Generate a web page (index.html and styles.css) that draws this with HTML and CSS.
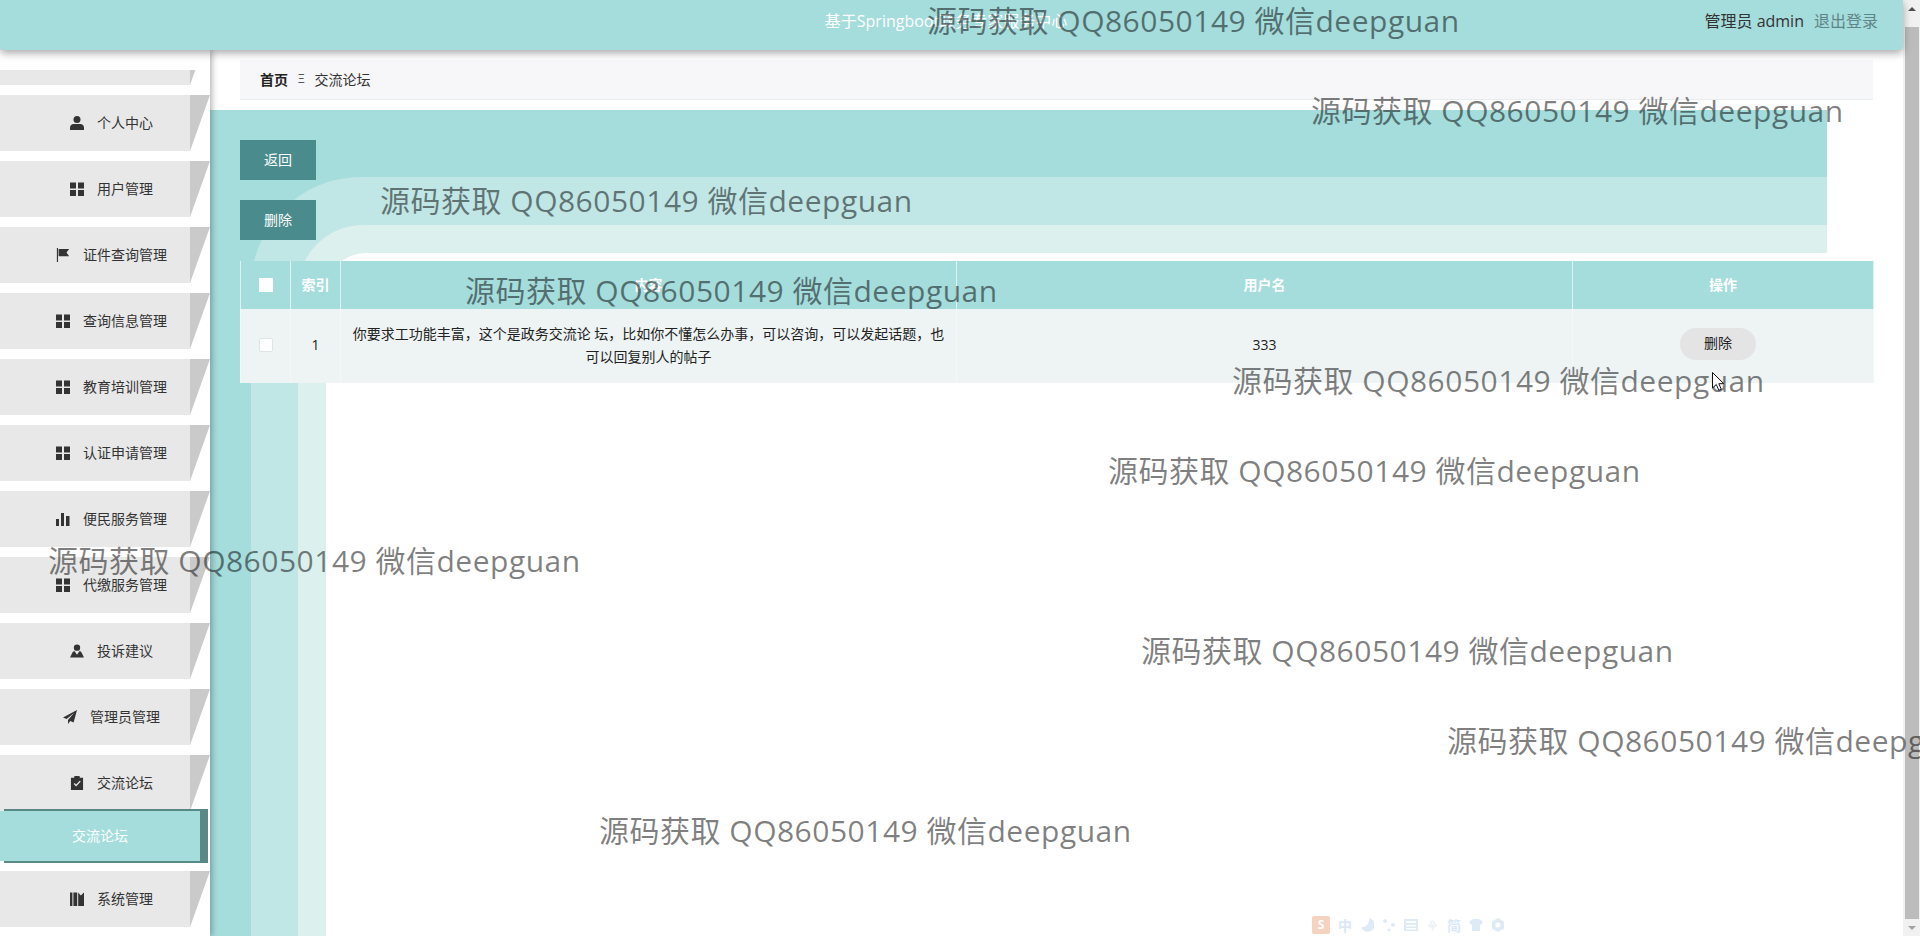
FILE: index.html
```html
<!DOCTYPE html>
<html lang="zh-CN">
<head>
<meta charset="UTF-8">
<meta name="viewport" content="width=device-width, initial-scale=1.0">
<title>交流论坛</title>
<link rel="stylesheet" href="styles.css">
</head>
<body>

<svg class="sprite" width="0" height="0">
    <symbol id="i-user" viewBox="0 0 14 14"><circle cx="7" cy="3.6" r="3.5"/><path d="M0 14v-2.4C0 9.4 1.8 8 3.6 8h6.8C12.2 8 14 9.4 14 11.6V14z"/></symbol>
    <symbol id="i-grid" viewBox="0 0 14 14"><path d="M0 .5h6v6H0zM8 .5h6v6H8zM0 8h6v6H0zM8 8h6v6H8z"/></symbol>
    <symbol id="i-flag" viewBox="0 0 14 16"><path d="M0 0h1.3v16H0zM2 1h12l-3 4 3 4.5H2z"/></symbol>
    <symbol id="i-bars" viewBox="0 0 14 14"><path d="M0 7h3v7H0zM5 1h3v13H5zM10 4h3.5v10H10z"/></symbol>
    <symbol id="i-tie" viewBox="0 0 15 14"><circle cx="7.5" cy="3.4" r="3.4"/><path d="M0 14l2.5-5.2C3 7.700 4 7.400 5 7.400L7.500 11 10 7.400c1 0 2 .3 2.500 1.400L15 14z"/></symbol>
    <symbol id="i-plane" viewBox="0 0 14 14"><path d="M14 0L0 7.600l3.600 1.500L11 3 5 10v4l2.300-3 3.300 1.400z"/></symbol>
    <symbol id="i-clip" viewBox="0 0 13 15"><path fill-rule="evenodd" d="M0 2h3.500V.8C3.500.3 4 0 4.500 0h4c.5 0 1 .3 1 .8V2H13v13H0zM3 8.500l2.600 2.700L10.500 6 9.400 5 5.600 9 4 7.400z"/></symbol>
    <symbol id="i-book" viewBox="0 0 14 14"><path d="M0 .5h2.400V14H0zM3.400.5h3.800v13.500H3.400zM8.200.5l2.600 3 3.200-3V14H8.200z"/></symbol>
</svg>

<div class="app">
    <div class="app-main">
        <header class="top-bar">
            <div class="top-title">基于Springboot政务专家服务中心</div>
            <div class="top-user">
                <span class="top-name">管理员 admin</span>
                <a class="top-logout" href="#">退出登录</a>
            </div>
        </header>

        <div class="layout">
            <aside class="sidebar">
                <nav class="menu">
                    <a class="menu-item menu-first" href="#"></a>
                    <a class="menu-item" href="#"><svg class="icon"><use href="#i-user"/></svg><span>个人中心</span></a>
                    <a class="menu-item" href="#"><svg class="icon"><use href="#i-grid"/></svg><span>用户管理</span></a>
                    <a class="menu-item" href="#"><svg class="icon"><use href="#i-flag"/></svg><span>证件查询管理</span></a>
                    <a class="menu-item" href="#"><svg class="icon"><use href="#i-grid"/></svg><span>查询信息管理</span></a>
                    <a class="menu-item" href="#"><svg class="icon"><use href="#i-grid"/></svg><span>教育培训管理</span></a>
                    <a class="menu-item" href="#"><svg class="icon"><use href="#i-grid"/></svg><span>认证申请管理</span></a>
                    <a class="menu-item" href="#"><svg class="icon"><use href="#i-bars"/></svg><span>便民服务管理</span></a>
                    <a class="menu-item" href="#"><svg class="icon"><use href="#i-grid"/></svg><span>代缴服务管理</span></a>
                    <a class="menu-item" href="#"><svg class="icon"><use href="#i-tie"/></svg><span>投诉建议</span></a>
                    <a class="menu-item" href="#"><svg class="icon"><use href="#i-plane"/></svg><span>管理员管理</span></a>
                    <a class="menu-item" href="#"><svg class="icon"><use href="#i-clip"/></svg><span>交流论坛</span></a>
                    <a class="menu-sub" href="#">交流论坛</a>
                    <a class="menu-item" href="#"><svg class="icon"><use href="#i-book"/></svg><span>系统管理</span></a>
                </nav>
            </aside>

            <main class="main">
                <!-- background bands behind the list -->
                <div class="bands">
                    <div class="band-1"><div class="band-2"><div class="band-3"><div class="band-4"></div></div></div></div>
                </div>

                <div class="crumbs">
                    <b>首页</b>
                    <span class="crumb-sep">Ξ</span>
                    <span>交流论坛</span>
                </div>

                <div class="actions">
                    <button class="btn">返回</button>
                    <button class="btn">删除</button>
                </div>

                <table class="list">
                    <colgroup>
                        <col class="col-check">
                        <col class="col-index">
                        <col class="col-text">
                        <col class="col-text">
                        <col class="col-ops">
                    </colgroup>
                    <thead>
                        <tr>
                            <th><input class="check check-head" type="checkbox"></th>
                            <th>索引</th>
                            <th>内容</th>
                            <th>用户名</th>
                            <th>操作</th>
                        </tr>
                    </thead>
                    <tbody>
                        <tr>
                            <td><input class="check" type="checkbox"></td>
                            <td>1</td>
                            <td>你要求工功能丰富，这个是政务交流论 坛，比如你不懂怎么办事，可以咨询，可以发起话题，也可以回复别人的帖子</td>
                            <td>333</td>
                            <td><button class="btn-row">删除</button></td>
                        </tr>
                    </tbody>
                </table>
            </main>
        </div>
    </div>

    <div class="scrollbar">
        <div class="scroll-btn"><span class="arrow-up"></span></div>
        <div class="scroll-thumb"></div>
        <div class="scroll-btn"><span class="arrow-down"></span></div>
    </div>
</div>

<div class="watermarks">
    <div class="wm wm-1">源码获取 QQ86050149 微信deepguan</div>
    <div class="wm wm-2">源码获取 QQ86050149 微信deepguan</div>
    <div class="wm wm-3">源码获取 QQ86050149 微信deepguan</div>
    <div class="wm wm-4">源码获取 QQ86050149 微信deepguan</div>
    <div class="wm wm-5">源码获取 QQ86050149 微信deepguan</div>
    <div class="wm wm-6">源码获取 QQ86050149 微信deepguan</div>
    <div class="wm wm-7">源码获取 QQ86050149 微信deepguan</div>
    <div class="wm wm-8">源码获取 QQ86050149 微信deepguan</div>
    <div class="wm wm-9">源码获取 QQ86050149 微信deepguan</div>
    <div class="wm wm-10">源码获取 QQ86050149 微信deepguan</div>
</div>

<!-- input method toolbar -->
<div class="ime">
    <span class="ime-logo">S</span>
    <span>中</span>
    <svg viewBox="0 0 14 14"><path d="M9 0a7 7 0 1 1-8 9c4 1.500 9-3 8-9z"/></svg>
    <svg viewBox="0 0 14 14"><circle cx="3" cy="3" r="2"/><circle cx="11" cy="7" r="2"/><circle cx="7" cy="12" r="1.500"/></svg>
    <svg viewBox="0 0 14 14"><path fill-rule="evenodd" d="M0 1h14v12H0zM2 3v2h10V3zM2 7v1.500h10V7zM2 10v1.500h10V10z"/></svg>
    <span class="ime-faint">⚘</span>
    <span>简</span>
    <svg viewBox="0 0 14 14"><path d="M4 1h6l4 3-2 3-1-1v7H3V6L2 7 0 4z"/></svg>
    <svg viewBox="0 0 14 14"><path fill-rule="evenodd" d="M7 0l6 3.500v7L7 14l-6-3.500v-7zM7 4.500a2.500 2.500 0 1 0 0 5 2.500 2.500 0 0 0 0-5z"/></svg>
</div>

<svg class="cursor" viewBox="0 0 12 19"><path d="M.5.5v15.500l3.800-3.500 2.500 5.800 2.500-1-2.500-5.600h5z" fill="#fff" stroke="#111"/></svg>

</body>
</html>
```

FILE: styles.css
```css
* {
    box-sizing: border-box;
}

html, body {
    margin: 0;
    padding: 0;
    height: 936px;
    overflow: hidden;
}

body {
    position: relative;
    font-family: "Open Sans", "Noto Sans CJK SC", sans-serif;
    font-size: 14px;
    color: #333;
    background-color: #fff;
}

a {
    text-decoration: none;
}

.sprite {
    position: absolute;
}

.app {
    display: flex;
    height: 936px;
}

.app-main {
    flex: 1;
    min-width: 0;
    display: flex;
    flex-direction: column;
}

/* top bar */
.top-bar {
    position: relative;
    z-index: 3;
    flex: none;
    height: 50px;
    display: grid;
    grid-template-columns: 1fr auto 1fr;
    align-items: center;
    padding: 0 25px 10px 0;
    background-color: #a5dcdc;
    border-radius: 0 0 4px 4px;
    box-shadow: 0 3px 9px rgba(0, 0, 0, 0.35);
}

.top-title {
    grid-column: 2;
    margin-left: 14px;
    font-size: 16px;
    color: #fff;
}

.top-user {
    grid-column: 3;
    justify-self: end;
    display: flex;
    gap: 10px;
    font-size: 16px;
}

.top-name {
    color: #333;
}

.top-logout {
    color: #5f8686;
}

/* sidebar */
.layout {
    flex: 1;
    display: flex;
    min-height: 0;
}

.sidebar {
    position: relative;
    z-index: 2;
    flex: none;
    width: 210px;
    padding-top: 20px;
    background-color: #fff;
    box-shadow: 2px 0 6px rgba(0, 0, 0, 0.3);
}

.menu {
    height: 100%;
    overflow: hidden;
}

.menu-item {
    position: relative;
    display: flex;
    align-items: center;
    justify-content: center;
    gap: 13px;
    width: 190px;
    height: 56px;
    margin-bottom: 10px;
    padding-left: 33px;
    color: #333;
    background-color: #e8e8e8;
}

.menu-item span {
    margin-bottom: 3px;
}

.menu-item::after {
    content: "";
    position: absolute;
    left: 100%;
    top: 0;
    width: 20px;
    height: 100%;
    background-color: #cbcaca;
    clip-path: polygon(0 0, 100% 0, 0 100%);
}

.menu-first {
    margin-top: -41px;
}

.menu-sub {
    position: relative;
    display: flex;
    align-items: center;
    justify-content: center;
    width: 204px;
    height: 54px;
    margin: -12px 0 8px 4px;
    padding: 0 4px 3px 0;
    color: #fff;
    background-color: #a5dcdc;
    border: 2px solid #5a8886;
    border-left: 0;
    border-right-width: 8px;
    box-shadow: -6px 0 0 -2px #a5dcdc;
}

.icon {
    flex: none;
    width: 14px;
    height: 14px;
    fill: #333;
}

/* main area */
.main {
    position: relative;
    flex: 1;
    min-width: 0;
    padding: 10px 30px 0;
}

.bands {
    position: absolute;
    left: 0;
    top: 60px;
    bottom: 0;
    width: 1617px;
}

.band-1, .band-2, .band-3, .band-4 {
    height: 100%;
}

.band-1 {
    padding: 67px 0 0 41px;
    background-color: #a5dcdc;
}

.band-2 {
    padding: 48px 0 0 47px;
    background-color: #c0e6e6;
    border-radius: 110px 0 0 0;
}

.band-3 {
    padding: 28px 0 0 28px;
    background-color: #dcf0ee;
    border-radius: 65px 0 0 0;
}

.band-4 {
    background-color: #fff;
    border-radius: 40px 0 0 0;
}

.crumbs {
    position: relative;
    display: flex;
    align-items: center;
    gap: 10px;
    height: 40px;
    padding: 0 0 2px 20px;
    color: #333;
    background-color: #f7f6f8;
    border-bottom: 1px solid #e8eef0;
}

.crumbs b {
    color: #222;
}

.crumb-sep {
    font-size: 12px;
    color: #555;
}

.actions {
    position: relative;
    display: flex;
    flex-direction: column;
    align-items: flex-start;
    gap: 20px;
    margin-top: 40px;
}

.btn {
    width: 76px;
    height: 40px;
    padding: 0 0 3px;
    border: none;
    color: #fff;
    font: inherit;
    background-color: #4a8c8e;
    cursor: pointer;
}

/* table */
.list {
    position: relative;
    width: 1633px;
    margin-top: 21px;
    table-layout: fixed;
    border-collapse: collapse;
}

.col-check, .col-index {
    width: 50px;
}

.col-text {
    width: 616px;
}

.col-ops {
    width: 301px;
}

.list th {
    height: 48px;
    padding: 0 10px 3px;
    color: #fff;
    background-color: #a5dcdc;
    border: 1px solid #dff3f3;
    border-width: 0 1px;
}

.list th:first-child {
    padding-bottom: 0;
}

.list td {
    height: 74px;
    padding: 0 10px 3px;
    line-height: 23px;
    text-align: center;
    color: #222;
    background-color: #eef4f4;
    border: 1px solid #f3f7f7;
    border-width: 0 1px;
}

.check {
    appearance: none;
    display: block;
    width: 14px;
    height: 14px;
    margin: 0 auto;
    background-color: #fff;
    border: 1px solid #dfe4e6;
    border-radius: 2px;
}

.check-head {
    border-color: #fff;
    border-radius: 0;
}

.btn-row {
    width: 76px;
    height: 32px;
    margin: 0 10px 2px 0;
    padding: 0 0 3px;
    border: none;
    border-radius: 16px;
    color: #222;
    font: inherit;
    vertical-align: middle;
    background-color: #e4e4e4;
    cursor: pointer;
}

/* page scrollbar */
.scrollbar {
    flex: none;
    width: 17px;
    display: flex;
    flex-direction: column;
    background-color: #f1f1f1;
}

.scroll-btn {
    flex: none;
    height: 17px;
    display: flex;
    align-items: center;
    justify-content: center;
}

.arrow-up, .arrow-down {
    width: 0;
    height: 0;
    border-left: 4px solid transparent;
    border-right: 4px solid transparent;
}

.arrow-up {
    border-bottom: 4px solid #505050;
}

.arrow-down {
    border-top: 4px solid #a3a3a3;
}

.scroll-thumb {
    flex: 1;
    margin: 10px 1px 0 2px;
    background-color: #bcbcbc;
}

/* watermark text over the whole page */
.watermarks {
    position: absolute;
    z-index: 5;
    inset: 0;
    overflow: hidden;
    display: flex;
    flex-direction: column;
    gap: 50px;
    padding-top: 1px;
    pointer-events: none;
}

.wm {
    height: 40px;
    line-height: 40px;
    font-size: 30px;
    letter-spacing: 0.5px;
    white-space: nowrap;
    color: rgba(0, 0, 0, 0.5);
}

.wm-1 { margin-left: 927px; }
.wm-2 { margin-left: 1311px; }
.wm-3 { margin-left: 380px; }
.wm-4 { margin-left: 465px; }
.wm-5 { margin-left: 1232px; }
.wm-6 { margin-left: 1108px; }
.wm-7 { margin-left: 48px; }
.wm-8 { margin-left: 1141px; }
.wm-9 { margin-left: 1447px; }
.wm-10 { margin-left: 599px; }

.ime {
    position: absolute;
    z-index: 4;
    left: 1312px;
    bottom: 1px;
    display: flex;
    align-items: center;
    gap: 8px;
    height: 20px;
    font-size: 14px;
    font-weight: bold;
    color: #cfe2f3;
    opacity: 0.75;
}

.ime svg {
    width: 14px;
    height: 14px;
    fill: #d4e5f4;
}

.ime-logo {
    width: 18px;
    height: 18px;
    line-height: 18px;
    text-align: center;
    font-size: 12px;
    color: #fff;
    background-color: #f4c4ad;
    border-radius: 2px;
}

.ime-faint {
    color: #e8eef2;
}

.cursor {
    position: absolute;
    z-index: 6;
    left: 1712px;
    top: 372px;
    width: 12px;
    height: 19px;
}
```
